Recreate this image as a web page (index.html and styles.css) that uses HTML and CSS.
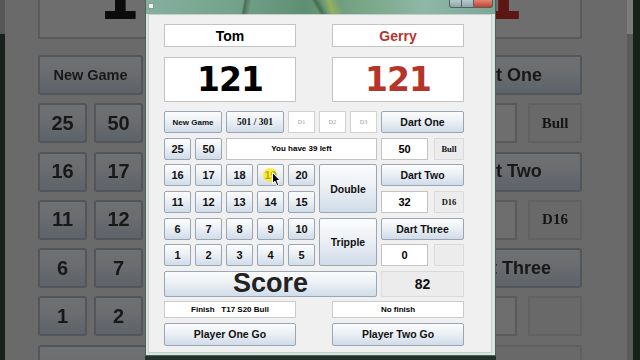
FILE: index.html
```html
<!DOCTYPE html>
<html>
<head>
<meta charset="utf-8">
<title>Darts Scorer</title>
<link rel="stylesheet" href="styles.css">
</head>
<body>
<div class="stage">
  <div class="side side-left">
    <div class="bgapp bg-left">
      <div class="bbox bbig"><span class="bdigit">1</span></div>
      <div class="bgrid bgrid-left">
        <div class="bbtn bspan2 bsmall">New Game</div>
        <div class="bbtn">25</div><div class="bbtn">50</div>
        <div class="bbtn">16</div><div class="bbtn">17</div>
        <div class="bbtn">11</div><div class="bbtn">12</div>
        <div class="bbtn">6</div><div class="bbtn">7</div>
        <div class="bbtn">1</div><div class="bbtn">2</div>
        <div class="bbtn bscore"></div>
      </div>
    </div>
  </div>

  <div class="window-col">
    <div class="window">
      <div class="titlebar">
        <div class="app-icon"></div>
        <div class="caption-btns">
          <div class="cap cap-min"></div>
          <div class="cap cap-max"></div>
          <div class="cap cap-close"></div>
        </div>
      </div>
      <div class="client">
        <div class="pair names">
          <div class="field name">Tom</div>
          <div class="field name red">Gerry</div>
        </div>
        <div class="pair totals">
          <div class="field total">121</div>
          <div class="field total red">121</div>
        </div>
        <div class="board">
          <div class="btn small span2">New Game</div>
          <div class="btn serif span2">501 / 301</div>
          <div class="field dart">D1</div>
          <div class="field dart">D2</div>
          <div class="field dart">D3</div>
          <div class="btn dartbtn">Dart One</div>

          <div class="btn num">25</div>
          <div class="btn num">50</div>
          <div class="field msg span5">You have 39 left</div>
          <div class="pick"><div class="field val">50</div><div class="tag">Bull</div></div>

          <div class="btn num">16</div>
          <div class="btn num">17</div>
          <div class="btn num">18</div>
          <div class="btn num">19</div>
          <div class="btn num">20</div>
          <div class="btn mod">Double</div>
          <div class="btn dartbtn">Dart Two</div>

          <div class="btn num">11</div>
          <div class="btn num">12</div>
          <div class="btn num">13</div>
          <div class="btn num">14</div>
          <div class="btn num">15</div>
          <div class="pick"><div class="field val">32</div><div class="tag">D16</div></div>

          <div class="btn num">6</div>
          <div class="btn num">7</div>
          <div class="btn num">8</div>
          <div class="btn num">9</div>
          <div class="btn num">10</div>
          <div class="btn mod">Tripple</div>
          <div class="btn dartbtn">Dart Three</div>

          <div class="btn num">1</div>
          <div class="btn num">2</div>
          <div class="btn num">3</div>
          <div class="btn num">4</div>
          <div class="btn num">5</div>
          <div class="pick"><div class="field val">0</div><div class="tag"></div></div>

          <div class="btn score span7">Score</div>
          <div class="tag remain">82</div>
        </div>
        <div class="pair finish">
          <div class="field fin">Finish   T17 S20 Bull</div>
          <div class="field fin">No finish</div>
        </div>
        <div class="pair go">
          <div class="btn gobtn">Player One Go</div>
          <div class="btn gobtn">Player Two Go</div>
        </div>

        <div class="cursor-glow"></div>
        <svg class="cursor" width="10" height="15" viewBox="0 0 10 15">
          <path d="M0.5 0.5 L0.5 11.5 L3 9.2 L5 13.8 L6.8 13 L4.9 8.6 L8.3 8.6 Z" fill="#000" stroke="#fff" stroke-width="1"/>
        </svg>
      </div>
    </div>
  </div>

  <div class="side side-right">
    <div class="bgapp bg-right">
      <div class="bbox bbig bred"><span class="bdigit">1</span></div>
      <div class="bgrid bgrid-right">
        <div class="bbtn bspan2 bdart"><span class="bclip">t One</span></div>
        <div class="bbox"></div><div class="btag">Bull</div>
        <div class="bbtn bspan2 bdart"><span class="bclip">t Two</span></div>
        <div class="bbox"></div><div class="btag">D16</div>
        <div class="bbtn bspan2 bdart bthree"><span class="bclip">t Three</span></div>
        <div class="bbox"></div><div class="btag"></div>
        <div class="btag bspan2"></div>
      </div>
    </div>
  </div>
</div>
</body>
</html>
```
FILE: styles.css
```css
* { box-sizing: border-box; }
html, body { margin: 0; padding: 0; }
body {
  width: 640px;
  height: 360px;
  overflow: hidden;
  background: #6a6a6a;
  font-family: "Liberation Sans", Arial, sans-serif;
}
.stage {
  display: flex;
  width: 640px;
  height: 360px;
}

/* ---------- darkened, enlarged background strips ---------- */
.side {
  height: 360px;
  overflow: hidden;
  flex-shrink: 0;
}
.side-left {
  width: 145px;
  background:
    linear-gradient(#575757, #575757) 0 0 / 5px 34px no-repeat,
    linear-gradient(to right, #18211b 0, #18211b 5px, #6a6a6a 5px);
}
.side-right {
  width: 144px;
  background:
    linear-gradient(#7c7c7c, #7c7c7c) 131px 0 / 6px 34px no-repeat,
    linear-gradient(to right, #6a6a6a 0, #6a6a6a 131px, #5a5a5a 131px, #5a5a5a 137px, #17211b 137px);
}
.bgapp {
  display: flex;
  flex-direction: column;
  height: 360px;
  filter: blur(0.5px);
}
.bg-left { align-items: flex-start; padding-left: 38px; }
.bg-right { align-items: flex-end; padding-right: 58px; }

.bbox {
  background: #6e6e6e;
  border: 2px solid #5a5a5a;
  flex-shrink: 0;
}
.bbig {
  width: 241px;
  height: 82px;
  margin-top: -43px;
  display: flex;
  align-items: center;
  padding-left: 58px;
  font-family: "DejaVu Sans", sans-serif;
  font-weight: bold;
  font-size: 60px;
  line-height: 1;
  color: #0c0c0c;
}
.bdigit { display: block; }
.bred {
  width: 239px;
  color: #5c1713;
  justify-content: flex-end;
  padding-left: 0;
  padding-right: 57px;
}

.bgrid {
  margin-top: 16px;
  display: grid;
  grid-template-rows: repeat(6, 40px) 47px;
  row-gap: 8.3px;
  flex-shrink: 0;
}
.bgrid-left { grid-template-columns: 49px 49px; column-gap: 7px; }
.bgrid-right { grid-template-columns: 85px 54px; column-gap: 11px; }
.bspan2 { grid-column: span 2; }

.bbtn {
  border: 2px solid #52565b;
  border-radius: 3px;
  background: linear-gradient(#6f7071, #6b6d6f 40%, #5d636a);
  display: flex;
  align-items: center;
  justify-content: center;
  font-weight: bold;
  font-size: 20px;
  color: #181818;
}
.bsmall { font-size: 14.5px; }
.bdart { font-size: 18px; justify-content: flex-start; padding-left: 62px; }
.bthree { padding-left: 57px; }
.bclip { display: block; white-space: nowrap; }
.bscore { width: 386px; }
.btag {
  border: 2px solid #616161;
  background: #696969;
  display: flex;
  align-items: center;
  justify-content: center;
  font-family: "Liberation Serif", serif;
  font-weight: bold;
  font-size: 15px;
  color: #151515;
}

/* ---------- the window ---------- */
.window-col {
  width: 351px;
  height: 360px;
  flex-shrink: 0;
  background: #223229;
}
.window {
  width: 351px;
  height: 356px;
  border: 1px solid #4d6159;
  border-top: none;
  background: #d9e5e1;
  display: flex;
  flex-direction: column;
}
.titlebar {
  height: 14px;
  flex-shrink: 0;
  display: flex;
  align-items: flex-start;
  background:
    linear-gradient(100deg, transparent 0, transparent 96px, rgba(40,70,40,.55) 98px, transparent 104px),
    linear-gradient(60deg, transparent 0, transparent 150px, rgba(30,60,30,.45) 153px, transparent 158px),
    linear-gradient(70deg, transparent 0, transparent 170px, rgba(190,200,60,.5) 176px, transparent 186px),
    linear-gradient(to right, #86b09e 0%, #74a28c 25%, #5f8f73 45%, #79a687 62%, #8fb7a7 80%, #7ea699 100%);
}
.app-icon {
  width: 6px;
  height: 6px;
  margin: 3px 0 0 2px;
  background: #eef2f1;
  border: 1px solid #8a9a94;
}
.caption-btns {
  margin-left: auto;
  margin-right: 2px;
  display: flex;
  height: 8px;
}
.cap {
  height: 8px;
  border: 1px solid #52625e;
  border-top: none;
}
.cap-min { width: 13px; background: linear-gradient(#b8c9cc, #8fa5aa); border-radius: 0 0 0 3px; }
.cap-max { width: 12px; background: linear-gradient(#b8c9cc, #8fa5aa); border-left: none; }
.cap-close { width: 19px; background: linear-gradient(#e08676, #c4402c); border-left: none; border-radius: 0 0 3px 0; }

.client {
  position: relative;
  margin: 0 3px 0 2px;
  height: 339px;
  background: #f0f0f0;
  border: 1px solid #c4cecb;
  padding: 9px 0 0 15px;
  display: flex;
  flex-direction: column;
  align-items: flex-start;
}

.pair {
  display: flex;
  gap: 36px;
  flex-shrink: 0;
}
.field {
  background: #fff;
  border: 1px solid #c3c3c3;
  display: flex;
  align-items: center;
  justify-content: center;
  color: #000;
  font-weight: bold;
}
.red { color: #b5352b; }
.names .field { width: 132px; height: 23px; font-size: 14px; }
.totals { margin-top: 10px; }
.totals .field {
  width: 132px;
  height: 45px;
  font-family: "DejaVu Sans", sans-serif;
  font-size: 33px;
  letter-spacing: -1px;
}

.board {
  margin-top: 9px;
  display: grid;
  grid-template-columns: repeat(7, 27px) 83px;
  grid-template-rows: repeat(6, 22px) 26px;
  column-gap: 4px;
  row-gap: 4.67px;
}
.span2 { grid-column: span 2; }
.span5 { grid-column: span 5; }
.span7 { grid-column: span 7; }

.btn {
  border: 1px solid #9aa6b4;
  border-radius: 2px;
  background: linear-gradient(#fbfcfd, #eef2f6 40%, #d0dce9);
  display: flex;
  align-items: center;
  justify-content: center;
  font-weight: bold;
  color: #111;
  font-size: 10.5px;
  white-space: nowrap;
}
.btn.small { font-size: 8px; }
.btn.serif { font-family: "Liberation Serif", serif; font-size: 9.5px; }
.btn.num { font-size: 11px; }
.btn.mod { grid-row: span 2; grid-column: span 2; font-size: 10.5px; }
.btn.dartbtn { font-size: 10.5px; }
.btn.score { font-size: 27px; color: #222; }

.dart {
  font-family: "Liberation Serif", serif;
  font-weight: normal;
  font-size: 6px;
  color: #9a9a9a;
  border-color: #d2d2d2;
}
.msg { font-size: 8px; }

.pick {
  display: flex;
  gap: 6px;
}
.val { width: 47px; font-size: 11px; }
.tag {
  flex: 1;
  background: #ececec;
  border: 1px solid #dadada;
  display: flex;
  align-items: center;
  justify-content: center;
  font-family: "Liberation Serif", serif;
  font-weight: bold;
  font-size: 8.5px;
  color: #111;
}
.tag.remain {
  font-family: "Liberation Sans", Arial, sans-serif;
  font-size: 14px;
}

.finish { margin-top: 4px; }
.finish .field {
  width: 132px;
  height: 17px;
  font-size: 8px;
  white-space: pre;
  border-color: #cbcbcb;
}
.go { margin-top: 5px; }
.go .btn { width: 132px; height: 23px; font-size: 10.5px; }

/* mouse pointer overlay */
.cursor-glow {
  position: absolute;
  left: 114px;
  top: 153px;
  width: 14px;
  height: 14px;
  border-radius: 50%;
  background: rgba(255, 232, 0, 0.7);
}
.cursor {
  position: absolute;
  left: 123px;
  top: 157px;
}
```
